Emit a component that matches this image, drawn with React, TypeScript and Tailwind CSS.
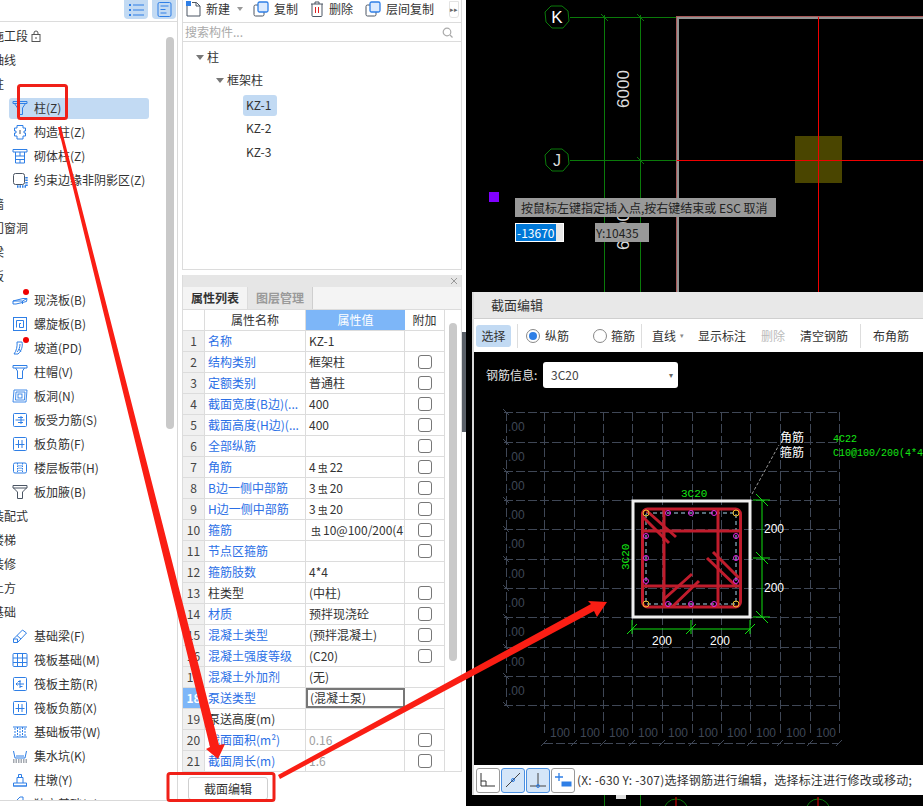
import React from "react";

const B = "#2f7fe6";
const D = "#4b5563";

type IconName = string;
function Icon({ name }: { name: IconName }) {
  const common = { width: 16, height: 16, viewBox: "0 0 16 16", fill: "none", stroke: B, strokeWidth: 1 } as const;
  switch (name) {
    case "zhu":
      return (<svg {...common}><path d="M1 1.500h14v2H1z" /><path d="M2.500 3.500 5.500 8v6.500h5V8l3-4.500" /></svg>);
    case "gouzao":
      return (<svg {...common}><path d="M5 1.500h6v2.500h2.500v3h-1.500v2h1.500v3H11v3H5v-3H2.500v-3H4V7H2.500V4H5z" /><path d="M8 6v4" stroke={D} /></svg>);
    case "qiti":
      return (<svg {...common}><path d="M1 1.500h14v2.500H1z" /><path d="M3.500 4v11h9V4M3.500 8h9M3.500 11.500h9M8 4v4M8 11.500V15" /></svg>);
    case "yueshu":
      return (<svg {...common}><rect x="1.500" y="1.500" width="11" height="11" rx="2" stroke={D} /><path d="M14.500 5v9.500H5" stroke={B} strokeWidth="2.500" strokeDasharray="1.500 1" /></svg>);
    case "xianjiao":
      return (<svg {...common}><path d="M1 9 11 6.500h4l-.5 3L4 12H1z" /><path d="M1 9h9.500l4.500-2.500M10.500 9v3" /></svg>);
    case "luoxuan":
      return (<svg {...common}><rect x="1.500" y="1.500" width="13" height="13" /><path d="M4.500 11.500v-7h7v7H7.500V7.500h1.500" /></svg>);
    case "podao":
      return (<svg {...common}><path d="M5 2h5c1 4-.5 9-4 12H2c2.500-3 3.500-8 3-12z" /><path d="M8 4c0 3-1 6-3 8M7 9l2 3" /></svg>);
    case "zhumao":
      return (<svg {...common}><path d="M1 1.500h14v2.500H1z" /><path d="M3.500 4 5.500 7v7.500h5V7l2-3" /></svg>);
    case "bandong":
      return (<svg {...common} strokeWidth=".9"><path d="M2 2h13l-1 12H1z" /><path d="M4 4h9l-.5 8h-9z" /><rect x="6" y="6" width="4" height="4" /></svg>);
    case "shouli":
      return (<svg {...common}><rect x="1.500" y="1.500" width="13" height="13" rx="1" /><path d="M3.500 8h9M6 5.500h5M6 10.500h5M9 4v8" /></svg>);
    case "fujin":
      return (<svg {...common}><rect x="1.500" y="1.500" width="13" height="13" rx="1" /><path d="M6.500 4v8M10 4v8M3.500 8.500h9" /></svg>);
    case "loudai":
      return (<svg {...common}><rect x="1.500" y="3" width="13" height="10" rx="1.500" /><path d="M5.500 3v10M10.500 3v10M7 5v6M9 5v6" strokeDasharray="1.500 1" /></svg>);
    case "jiaye":
      return (<svg {...common} stroke={D}><path d="M1 1.500h14v2.500H1z" /><path d="M1.500 4 5.500 8v6.500h5V8l4-4" /></svg>);
    case "jichuliang":
      return (<svg {...common}><path d="M1.500 11 10.500 2 14.500 5l-9 9.500H1.500z" /><path d="M5 7.500 9 11M1.500 11h4v3.500" /></svg>);
    case "faban":
      return (<svg {...common}><rect x="1" y="1.500" width="14" height="13" rx="1" /><path d="M1 6h14M1 10.500h14M5.500 1.500v13M10.500 1.500v13" /></svg>);
    case "zhujin":
      return (<svg {...common}><rect x="1.500" y="1.500" width="13" height="13" rx="1" /><path d="M8 4v8M4 8h8M6 5.500h2.500M8 10.500h2.500M5.500 6.500 4 8l1.500 1.500" /></svg>);
    case "bandai":
      return (<svg {...common}><path d="M1 3h14M1 13h14" /><path d="M5.500 3v10M10.500 3v10M3 4v8M8 4v8M13 4v8" strokeDasharray="2 1" /></svg>);
    case "jishui":
      return (<svg {...common} stroke={D}><path d="M1.500 3 3 10h10l1.500-7" stroke={B} /><path d="M1 12h14M1 14h14" strokeDasharray="1.500 1" /><path d="M4 8h8" stroke={B} /></svg>);
    case "zhudun":
      return (<svg {...common}><path d="M1 14h14M1.500 11h13v3h-13zM5 11V5.500h6V11M6.500 5.500V2.500h3v3" /></svg>);
    case "duli":
      return (<svg {...common}><path d="M5 4 8 1h3v7H5z" /></svg>);
    default:
      return <svg {...common} />;
  }
}

type Item = { t: string; icon?: string; dot?: boolean; sel?: boolean; lock?: boolean };
const items: Item[] = [
  { t: "施工段", lock: true },
  { t: "轴线" },
  { t: "柱" },
  { t: "柱(Z)", icon: "zhu", sel: true },
  { t: "构造柱(Z)", icon: "gouzao" },
  { t: "砌体柱(Z)", icon: "qiti" },
  { t: "约束边缘非阴影区(Z)", icon: "yueshu" },
  { t: "墙" },
  { t: "门窗洞" },
  { t: "梁" },
  { t: "板" },
  { t: "现浇板(B)", icon: "xianjiao", dot: true },
  { t: "螺旋板(B)", icon: "luoxuan" },
  { t: "坡道(PD)", icon: "podao", dot: true },
  { t: "柱帽(V)", icon: "zhumao" },
  { t: "板洞(N)", icon: "bandong" },
  { t: "板受力筋(S)", icon: "shouli" },
  { t: "板负筋(F)", icon: "fujin" },
  { t: "楼层板带(H)", icon: "loudai" },
  { t: "板加腋(B)", icon: "jiaye" },
  { t: "装配式" },
  { t: "楼梯" },
  { t: "装修" },
  { t: "土方" },
  { t: "基础" },
  { t: "基础梁(F)", icon: "jichuliang" },
  { t: "筏板基础(M)", icon: "faban" },
  { t: "筏板主筋(R)", icon: "zhujin" },
  { t: "筏板负筋(X)", icon: "fujin" },
  { t: "基础板带(W)", icon: "bandai" },
  { t: "集水坑(K)", icon: "jishui" },
  { t: "柱墩(Y)", icon: "zhudun" },
  { t: "独立基础(D)", icon: "duli" },
];

function LeftPanel() {
  return (
    <div className="w-[178px] h-[801px] shrink-0 border-r border-b border-[#d9d9d9] flex flex-col overflow-hidden">
      <div className="h-[22px] shrink-0 border-b border-[#dcdcdc] flex justify-end pr-[1px] gap-[4px]">
        <div className="w-[24px] h-[19px] bg-[#c2daf3] rounded-b-[4px] flex items-center justify-center">
          <svg width="16" height="14" viewBox="0 0 16 14" fill="none" stroke={B}>
            <path d="M5 2h11M5 7h11M5 12h11" />
            <path d="M1 2h2M1 7h2M1 12h2" strokeWidth="2" />
          </svg>
        </div>
        <div className="w-[24px] h-[19px] bg-[#c2daf3] rounded-b-[4px] flex items-center justify-center">
          <svg width="15" height="15" viewBox="0 0 15 15" fill="none" stroke={B}>
            <rect x="1" y="0.500" width="13" height="14" rx="1.500" />
            <path d="M3.500 4h8M3.500 7.500h5M3.500 11h6" />
          </svg>
        </div>
      </div>
      <div className="flex flex-1 min-h-0">
        <div className="w-[166px] shrink-0 pt-[2px] overflow-hidden">
          {items.map((it) =>
            it.icon ? (
              <div key={it.t} className="h-6 flex items-center pl-[9px]">
                <div className={`w-[140px] h-[21px] rounded-[3px] flex items-center pl-[3px] ${it.sel ? "bg-[#c2daf3]" : ""}`}>
                  <span className="relative w-[16px] h-[16px] shrink-0">
                    <Icon name={it.icon} />
                    {it.dot && <span className="absolute -top-[3px] right-[-1px] w-[6px] h-[6px] rounded-full bg-[#f00000]" />}
                  </span>
                  <span className="ml-[6px] whitespace-nowrap">{it.t}</span>
                </div>
              </div>
            ) : (
              <div key={it.t} className="h-6 flex items-center -ml-2 whitespace-nowrap">
                {it.t}
                {it.lock && (
                  <svg className="ml-[3px]" width="10" height="12" viewBox="0 0 10 12" fill="none" stroke="#555">
                    <rect x="1" y="4.500" width="8" height="7" />
                    <path d="M3 4.500V3a2 2 0 0 1 4 0v1.500M5 7v2" />
                  </svg>
                )}
              </div>
            )
          )}
        </div>
        <div className="w-[8px] pt-[15px] shrink-0">
          <div className="w-[8px] h-[392px] rounded-full bg-[#c9c9c9]" />
        </div>
      </div>
    </div>
  );
}

function ToolBtn({ icon, label, w, caret }: { icon: React.ReactNode; label: string; w: string; caret?: boolean }) {
  return (
    <div className={`flex items-center gap-[5px] ${w}`}>
      {icon}
      <span>{label}</span>
      {caret && <span className="w-0 h-0 ml-[2px] border-x-[3px] border-x-transparent border-t-[4px] border-t-[#999]" />}
    </div>
  );
}

const copyIcon = (
  <svg width="16" height="16" viewBox="0 0 16 16" fill="none">
    <rect x="1" y="4" width="10" height="11" rx="1.500" stroke={D} />
    <rect x="5" y="1" width="10" height="10" rx="1.500" fill="#dbeafe" stroke={B} strokeWidth="1.300" />
  </svg>
);

function UpperPanel() {
  return (
    <div className="h-[270px] shrink-0 border-x border-b border-[#dcdcdc] flex flex-col">
      <div className="h-[23px] shrink-0 border-b border-[#dcdcdc] flex items-center pl-[3px] pb-[4px]">
        <ToolBtn
          w="w-[67px]"
          label="新建"
          caret
          icon={
            <svg width="15" height="16" viewBox="0 0 15 16" fill="none" stroke={D}>
              <path d="M1 2v13h13V5L10.500 1.500H6" />
              <path d="M10 1.500V5h4" />
              <rect x="0" y="0" width="5" height="5" fill={B} stroke="none" />
            </svg>
          }
        />
        <ToolBtn w="w-[57px]" label="复制" icon={copyIcon} />
        <ToolBtn
          w="w-[55px]"
          label="删除"
          icon={
            <svg width="14" height="16" viewBox="0 0 14 16" fill="none" stroke={D}>
              <path d="M1 3h12M5 3V1h4v2M2 3v11.500a1 1 0 0 0 1 1h8a1 1 0 0 0 1-1V3" />
              <path d="M5.500 6v6M8.500 6v6" stroke="#e02020" />
            </svg>
          }
        />
        <ToolBtn w="w-[84px]" label="层间复制" icon={copyIcon} />
        <div className="w-[10px] h-[17px] border border-[#e3e3e3] rounded-b-[3px] text-[7px] text-[#666] flex items-center justify-center leading-none">▸▸</div>
      </div>
      <div className="h-[19px] shrink-0 border-b border-[#dcdcdc] flex items-center justify-between pl-[2px] pr-[8px] text-[#aaa]">
        <span>搜索构件...</span>
        <svg width="11" height="11" viewBox="0 0 11 11" fill="none" stroke="#aaa" strokeWidth="1.200">
          <circle cx="5" cy="5" r="3.800" />
          <path d="m8 8 2.500 2.500" />
        </svg>
      </div>
      <div className="pt-[3px]">
        <div className="h-6 flex items-center pl-[13px]">
          <span className="w-0 h-0 border-x-[4px] border-x-transparent border-t-[5px] border-t-[#777] mr-[3px]" />
          柱
        </div>
        <div className="h-6 flex items-center pl-[33px] -mt-[1px]">
          <span className="w-0 h-0 border-x-[4px] border-x-transparent border-t-[5px] border-t-[#777] mr-[3px]" />
          框架柱
        </div>
        <div className="h-6 flex items-center pl-[60px] mt-[1px]">
          <span className="w-[34px] h-[21px] rounded-[3px] bg-[#c2daf3] pl-[3px] flex items-center">KZ-1</span>
        </div>
        <div className="h-6 flex items-center pl-[63px] -mt-[1px]">KZ-2</div>
        <div className="h-6 flex items-center pl-[63px]">KZ-3</div>
      </div>
    </div>
  );
}

const Steel = () => <span className="text-[10px] align-[3px] mx-[2px]">虫</span>;
type Row = { n: number; name: string; v: React.ReactNode; blue?: boolean; check?: boolean; gray?: boolean; sel?: boolean };
const rows: Row[] = [
  { n: 1, name: "名称", v: "KZ-1", blue: true },
  { n: 2, name: "结构类别", v: "框架柱", blue: true, check: true },
  { n: 3, name: "定额类别", v: "普通柱", blue: true, check: true },
  { n: 4, name: "截面宽度(B边)(...", v: "400", blue: true, check: true },
  { n: 5, name: "截面高度(H边)(...", v: "400", blue: true, check: true },
  { n: 6, name: "全部纵筋", v: "", blue: true, check: true },
  { n: 7, name: "角筋", v: <>4<Steel />22</>, blue: true, check: true },
  { n: 8, name: "B边一侧中部筋", v: <>3<Steel />20</>, blue: true, check: true },
  { n: 9, name: "H边一侧中部筋", v: <>3<Steel />20</>, blue: true, check: true },
  { n: 10, name: "箍筋", v: <><Steel />10@100/200(4*4)</>, blue: true, check: true },
  { n: 11, name: "节点区箍筋", v: "", blue: true, check: true },
  { n: 12, name: "箍筋肢数", v: "4*4", blue: true },
  { n: 13, name: "柱类型", v: "(中柱)", check: true },
  { n: 14, name: "材质", v: "预拌现浇砼", blue: true, check: true },
  { n: 15, name: "混凝土类型", v: "(预拌混凝土)", blue: true, check: true },
  { n: 16, name: "混凝土强度等级", v: "(C20)", blue: true, check: true },
  { n: 17, name: "混凝土外加剂", v: "(无)", blue: true },
  { n: 18, name: "泵送类型", v: "(混凝土泵)", blue: true, sel: true },
  { n: 19, name: "泵送高度(m)", v: "" },
  { n: 20, name: "截面面积(m²)", v: "0.16", blue: true, gray: true, check: true },
  { n: 21, name: "截面周长(m)", v: "1.6", blue: true, gray: true, check: true },
];

function PropTable() {
  return (
    <div className="flex-1 min-h-0 flex">
      <div className="w-[262px] shrink-0">
        <div className="flex h-[21px] border-b border-[#dcdcdc]">
          <div className="w-[22px] border-r border-[#dcdcdc]" />
          <div className="w-[101px] border-r border-[#dcdcdc] flex items-center justify-center">属性名称</div>
          <div className="w-[99px] bg-[#7db6f8] text-white flex items-center justify-center">属性值</div>
          <div className="w-[40px] border-r border-[#dcdcdc] flex items-center justify-center">附加</div>
        </div>
        {rows.map((r) => (
          <div key={r.n} className="flex h-[21px] border-b border-[#dcdcdc]">
            <div className={`w-[22px] border-r border-[#dcdcdc] flex items-center justify-center text-[#444] ${r.sel ? "bg-[#7db6f8] text-white font-bold" : "bg-[#f0f0f0]"}`}>{r.n}</div>
            <div className={`w-[101px] border-r border-[#dcdcdc] flex items-center pl-[3px] whitespace-nowrap overflow-hidden ${r.blue ? "text-[#2b6fe6]" : ""}`}>{r.name}</div>
            <div className={`w-[99px] flex items-center whitespace-nowrap overflow-hidden ${r.gray ? "text-[#a0a0a0]" : ""} ${r.sel ? "border-2 border-[#777] pl-[2px]" : "border-r border-[#dcdcdc] pl-[3px]"}`}>{r.v}</div>
            <div className="w-[40px] border-r border-[#dcdcdc] flex items-center justify-center">
              {r.check && <span className="w-[14px] h-[14px] border border-[#777] rounded-[3px]" />}
            </div>
          </div>
        ))}
      </div>
      <div className="pl-[4px] pt-[13px]">
        <div className="w-[8px] h-[338px] rounded-full bg-[#c9c9c9]" />
      </div>
    </div>
  );
}

function LowerPanel() {
  return (
    <div className="flex-1 min-h-0 flex flex-col">
      <div className="h-[497px] shrink-0 border-x border-b border-[#dcdcdc] flex flex-col">
        <div className="h-[12px] shrink-0 bg-[#e6e6e6] flex items-center justify-end pr-[3px] text-[#999]">
          <svg width="8" height="8" viewBox="0 0 8 8" stroke="#999"><path d="m1 1 6 6M7 1 1 7" /></svg>
        </div>
        <div className="h-[23px] shrink-0 flex bg-[#f4f4f4] border-b border-[#dcdcdc]">
          <div className="w-[65px] bg-[#f4f4f4] border-r border-[#dcdcdc] flex items-center justify-center font-bold">属性列表</div>
          <div className="w-[65px] bg-[#e6e6e6] border-r border-[#cfcfcf] flex items-center justify-center font-bold text-[#9a9a9a]">图层管理</div>
        </div>
        <PropTable />
      </div>
      <div className="pt-[5px] pl-[6px]">
        <button className="w-[80px] h-[23px] border border-[#cfcfcf] rounded-[3px] bg-white flex items-center justify-center">截面编辑</button>
      </div>
    </div>
  );
}

function CadBack() {
  return (
    <svg className="absolute inset-0 w-[457px] h-[806px]" viewBox="466 0 457 806">
      <g stroke="#0a7a0a" fill="none">
        <polygon points="562,6 568,11 569,21 563,28 552,28 546,22 545,12 551,6" />
        <polygon points="562,149 568,154 569,164 563,171 552,171 546,165 545,155 551,149" />
        <path d="M570 17.500h106M570 160.500h106M604.500 15v277M640.500 15v277" />
        <path d="m601 14 7 7m29-7 7 7M637 157l7 7" />
      </g>
      <text x="557" y="23" fontSize="17" fill="#fff" textAnchor="middle" fontFamily="Liberation Sans">K</text>
      <text x="557" y="166" fontSize="16" fill="#ddd" textAnchor="middle" fontFamily="Liberation Sans">J</text>
      <text transform="translate(629 89) rotate(-90)" fontSize="17" fill="#ddd" textAnchor="middle" fontFamily="Liberation Sans">6000</text>
      <text transform="translate(629 231) rotate(-90)" fontSize="17" fill="#ddd" textAnchor="middle" fontFamily="Liberation Sans">6000</text>
      <rect x="795" y="136" width="47" height="47" fill="#4a4500" />
      <path d="M676 17.500H923M677.500 16V292" stroke="#929292" strokeWidth="3" />
      <path d="M676 16.500H923M676.500 16V292" stroke="#a85858" strokeWidth="1" />
      <path d="M818.500 17V292M677 160.500H923" stroke="#f00000" />
      <rect x="489" y="192" width="10" height="10" fill="#8000ff" />
      <g fill="none" stroke="#0a7a0a">
        <circle cx="676" cy="811" r="12" />
        <circle cx="818" cy="811" r="12" />
        <path d="M604.500 795V806M640.500 795V806" />
      </g>
      <path d="M676 797v9M818 797v9" stroke="#f00000" />
      <rect x="616" y="795" width="10" height="4" fill="#ddd" />
    </svg>
  );
}

const GX = [544, 574, 603, 632, 662, 692, 721, 750, 780, 810, 839];
const GY = [412, 442, 471, 500, 529, 559, 588, 617, 647, 676, 705];

function Section() {
  const red = "#c01c2c";
  return (
    <svg className="w-[449px] h-[413px]" viewBox="474 352 449 413">
      <g stroke="#3f4756" strokeDasharray="9 3" fill="none">
        {GX.map((x) => <path key={x} d={`M${x + 0.5} 412V735`} />)}
        {GY.map((y) => <path key={y} d={`M504 ${y + 0.5}H839`} />)}
        <path d="M506.500 412V705M544 743.500H839" />
      </g>
      <g stroke="#3f4756" fill="none">
        {GY.map((y) => <path key={y} d={`M503 ${y - 3}l6 6`} />)}
        {GX.map((x) => <path key={x} d={`M${x - 3} 746l6 -6`} />)}
      </g>
      <g fontSize="12" fill="#3f4756" fontFamily="Liberation Sans">
        {GY.slice(0, 10).map((y) => <text key={y} x="508" y={y + 19}>.00</text>)}
        {GX.slice(0, 10).map((x) => <text key={x} x={x + 6} y="737">100</text>)}
      </g>
      <rect x="633" y="501" width="117" height="116" fill="none" stroke="#efefef" strokeWidth="3" />
      <rect x="646" y="513" width="90" height="91" fill="none" stroke="#a9d6ee" strokeDasharray="4 3" />
      <g fill="none" stroke={red} strokeWidth="3">
        <rect x="642.500" y="509" width="98" height="98" rx="5" />
        <path d="M664 509V607M718 509V607M642 531H741M642 586H741" />
        <path d="M643 517 669 543M647 511 676 537M713 552 739 578M707 558 735 585M663 600 692 574M672 607 699 581" />
      </g>
      <g fill="none" stroke="#e828e8">
        {[668, 691, 714].map((x) => <g key={x}><circle cx={x} cy="513" r="2.500" /><circle cx={x} cy="604" r="2.500" /></g>)}
        {[536, 558, 581].map((y) => <g key={y}><circle cx="646" cy={y} r="2.500" /><circle cx="736" cy={y} r="2.500" /></g>)}
      </g>
      <g fill="none" stroke="#f0c030">
        {[[646, 513], [736, 513], [646, 604], [736, 604]].map(([x, y]) => <circle key={`${x}${y}`} cx={x} cy={y} r="3" />)}
      </g>
      <g fill="none" stroke="#10e010">
        <path d="M762 500V617M753 500H770M753 558H770M753 617H770M632 629H750M632 620V634M691 620V634M750 620V634" />
        <path d="M756 494l12 12M756 552l12 12M756 611l12 12M627 634l10-10M686 634l10-10M745 634l10-10" />
      </g>
      <path d="M752 494l27-49" stroke="#999" strokeDasharray="3 2" fill="none" />
      <g fill="#fff" fontSize="12" fontFamily="Liberation Sans">
        <text x="764" y="533">200</text>
        <text x="764" y="592">200</text>
        <text x="652" y="645">200</text>
        <text x="710" y="645">200</text>
      </g>
      <g fill="#fff" fontSize="12" fontFamily="Noto Sans CJK SC">
        <text x="780" y="442">角筋</text>
        <text x="780" y="457">箍筋</text>
      </g>
      <g fill="#14e614" fontSize="10" fontFamily="Liberation Mono">
        <text x="833" y="442">4C22</text>
        <text x="833" y="456">C10@100/200(4*4)</text>
        <text x="681" y="497" fontSize="11">3C20</text>
        <text transform="translate(629 570) rotate(-90)" fontSize="11">3C20</text>
      </g>
    </svg>
  );
}

function StatusBtn({ on, children }: { on?: boolean; children: React.ReactNode }) {
  return (
    <div className={`w-[24px] h-[25px] rounded-[3px] border flex items-center justify-center ${on ? "bg-[#d5e6f8] border-[#4a90e2]" : "border-[#999] bg-white"}`}>
      {children}
    </div>
  );
}

function Radio({ on }: { on?: boolean }) {
  return (
    <span className="w-[14px] h-[14px] rounded-full border border-[#888] flex items-center justify-center bg-white shrink-0">
      {on && <span className="w-[8px] h-[8px] rounded-full bg-[#2f7fe6]" />}
    </span>
  );
}

function Dialog() {
  return (
    <div className="absolute left-[6px] top-[292px] w-[451px] h-[503px] border-l-2 border-[#dadada] bg-black flex flex-col">
      <div className="h-[27px] shrink-0 bg-[#e8e8e8] flex items-center pl-[17px] border-b border-[#cfcfcf] text-[13px]">截面编辑</div>
      <div className="h-[33px] shrink-0 bg-white flex items-center pl-[2px]">
        <div className="w-[35px] h-[22px] rounded-[3px] bg-[#c2daf3] flex items-center justify-center">选择</div>
        <div className="w-px h-[24px] bg-[#ddd] ml-[6px]" />
        <span className="ml-[8px]"><Radio on /></span>
        <span className="ml-[5px]">纵筋</span>
        <span className="ml-[24px]"><Radio /></span>
        <span className="ml-[4px]">箍筋</span>
        <div className="w-px h-[24px] bg-[#ddd] ml-[6px]" />
        <div className="ml-[7px] w-[38px] h-[22px] pl-[3px] flex items-center">直线<span className="text-[7px] text-[#888] ml-[4px]">▾</span></div>
        <span className="ml-[11px]">显示标注</span>
        <span className="ml-[15px] text-[#bbb]">删除</span>
        <span className="ml-[15px]">清空钢筋</span>
        <div className="w-px h-[24px] bg-[#ddd] ml-[12px]" />
        <span className="ml-[12px]">布角筋</span>
      </div>
      <div className="flex-1 min-h-0 relative">
        <Section />
        <div className="absolute left-[12px] top-[10px] flex items-center text-[#e4e4e4]">
          <span className="w-[57px]">钢筋信息:</span>
          <div className="w-[135px] h-[26px] rounded-[3px] bg-white text-[#444] flex items-center justify-between pl-[8px] pr-[5px]">
            3C20<span className="text-[8px] text-[#666]">▾</span>
          </div>
        </div>
      </div>
      <div className="h-[30px] shrink-0 bg-white flex items-center pl-[2px] gap-[1px] whitespace-nowrap overflow-hidden">
        <StatusBtn>
          <svg width="18" height="18" viewBox="0 0 18 18" fill="none" stroke="#333"><path d="M2 2v13h14M2 10h5v5" /></svg>
        </StatusBtn>
        <StatusBtn on>
          <svg width="18" height="18" viewBox="0 0 18 18" fill="none" stroke="#444"><path d="M2 16 16 2" /><circle cx="9" cy="9" r="1.500" stroke={B} /></svg>
        </StatusBtn>
        <StatusBtn on>
          <svg width="18" height="18" viewBox="0 0 18 18" fill="none" stroke="#444"><path d="M1 15h16M9 2v13" /><circle cx="9" cy="15" r="1.500" stroke={B} /></svg>
        </StatusBtn>
        <StatusBtn>
          <svg width="18" height="18" viewBox="0 0 18 18" fill="none" stroke={B}><path d="M5 2v8M1 6h8" strokeWidth="1.300" /><rect x="8" y="11" width="9" height="4" fill={B} /></svg>
        </StatusBtn>
        <span className="ml-[1px] tracking-[0.2px]">(X: -630 Y: -307)选择钢筋进行编辑，选择标注进行修改或移动;</span>
      </div>
    </div>
  );
}

function Cad() {
  return (
    <div className="relative flex-1 h-[806px] bg-black overflow-hidden">
      <CadBack />
      <div className="absolute left-[49px] top-[198px] w-[261px] h-[19px] bg-[#999] text-[#222] flex items-center pl-[6px] whitespace-nowrap">按鼠标左键指定插入点,按右键结束或 ESC 取消</div>
      <div className="absolute left-[49px] top-[223px] w-[49px] h-[19px] bg-[#e8e8e8] border border-white flex items-center">
        <span className="w-[40px] h-[17px] bg-[#0078d7] text-white pl-[1px] flex items-center">-13670</span>
      </div>
      <div className="absolute left-[129px] top-[223px] w-[54px] h-[19px] bg-[#999] text-[#222] flex items-center pl-[1px]">Y:10435</div>
      <Dialog />
    </div>
  );
}

function Overlay() {
  return (
    <svg className="absolute inset-0 w-[923px] h-[806px] pointer-events-none" viewBox="0 0 923 806">
      <rect x="18.500" y="85.500" width="48" height="33" rx="2" fill="none" stroke="#f02018" strokeWidth="3" />
      <rect x="168" y="773.500" width="106" height="27" rx="2" fill="none" stroke="#f02018" strokeWidth="3" />
      <polygon points="58,127 210,747 206,749 218,759 225,744 219,745 61,127" fill="#fa1e14" />
      <polygon points="278,775 591,604 588,601 607,602 597,617 594,611 280,779" fill="#fa1e14" />
    </svg>
  );
}

export default function App() {
  return (
    <div className="relative w-[923px] h-[806px] flex overflow-hidden bg-white text-[12px] text-[#333] font-['Noto_Sans_CJK_SC','Liberation_Sans',sans-serif]">
      <LeftPanel />
      <div className="w-[280px] ml-[4px] shrink-0 flex flex-col gap-[5px]">
        <UpperPanel />
        <LowerPanel />
      </div>
      <div className="w-[4px] shrink-0 pt-[332px]">
        <div className="w-[4px] h-[100px] bg-[#5a6068]" />
      </div>
      <Cad />
      <Overlay />
    </div>
  );
}
